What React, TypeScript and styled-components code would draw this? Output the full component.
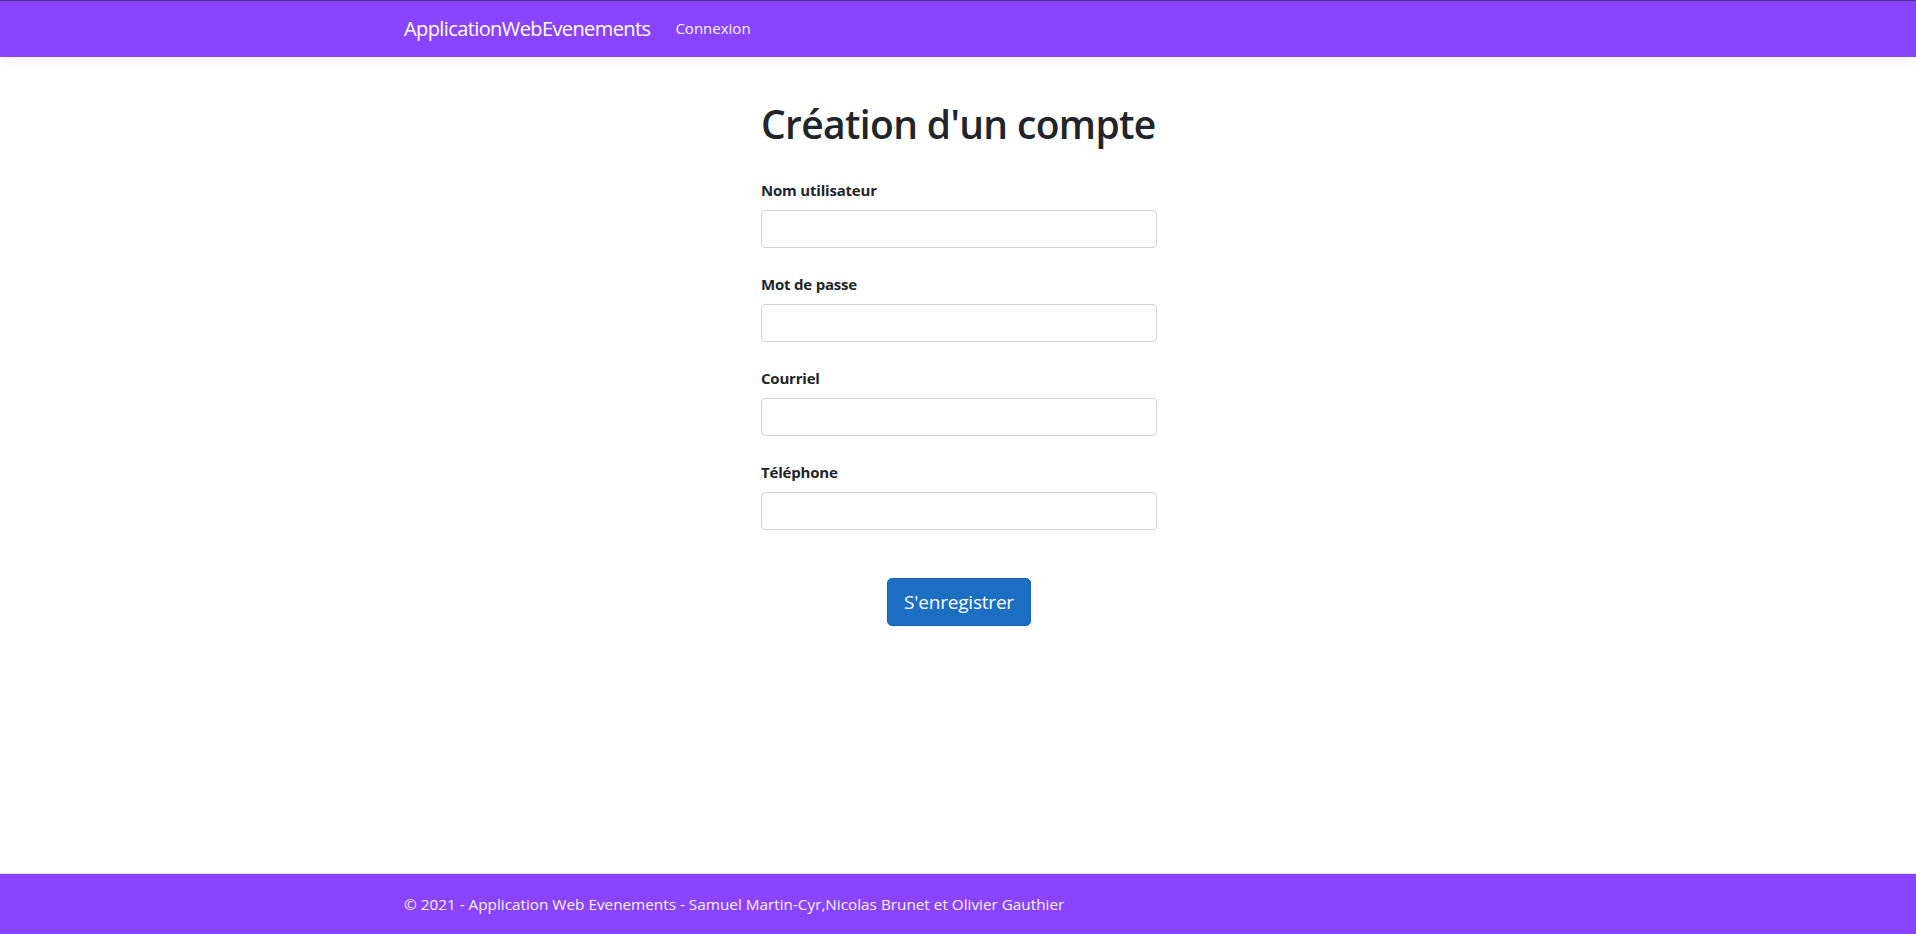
import React from "react";
import styled, { createGlobalStyle } from "styled-components";

const GlobalStyle = createGlobalStyle`
  html, body { margin: 0; padding: 0; }
  body {
    font-family: "Open Sans", "Noto Sans", "Liberation Sans", sans-serif;
    font-size: 16px;
    line-height: 1.5;
    color: #212529;
    background: #fff;
  }
  * { box-sizing: border-box; }
`;

const Page = styled.div`
  min-height: 934px;
  display: flex;
  flex-direction: column;
`;

const NavBar = styled.header`
  height: 57px;
  background: #8b44fe;
  border-top: 1px solid #4b3190;
  box-shadow: 0 4px 12px rgba(0, 0, 0, 0.05);
`;

const Container = styled.div`
  width: 1140px;
  margin: 0 auto;
  padding: 0 15px 0 16px;
  height: 100%;
  display: flex;
  align-items: center;
`;

const Brand = styled.a`
  color: #fff;
  font-size: 20px;
  line-height: 30px;
  margin-right: 17px;
  text-decoration: none;
  letter-spacing: -0.6px;
  margin-top: -1px;
`;

const NavLink = styled.a`
  color: #f4eeff;
  font-size: 15px;
  padding: 0 8px;
  text-decoration: none;
  margin-top: -2px;
`;

const Main = styled.main`
  flex: 1;
  display: flex;
  flex-direction: column;
  align-items: center;
  padding-top: 43px;
  padding-left: 2px;
`;

const Form = styled.form`
  width: 396px;
  display: flex;
  flex-direction: column;
`;

const Title = styled.h1`
  margin: 0 0 30px;
  font-size: 39px;
  line-height: 48px;
  font-weight: 600;
  color: #212529;
  letter-spacing: -0.65px;
  white-space: nowrap;
`;

const Group = styled.div`
  display: flex;
  flex-direction: column;
  margin-bottom: 24px;
`;

const Label = styled.label`
  font-weight: 700;
  font-size: 15px;
  line-height: 24px;
  margin-bottom: 8px;
  letter-spacing: -0.2px;
`;

const Input = styled.input`
  height: 38px;
  width: 100%;
  border: 1px solid #ced4da;
  border-radius: 4px;
  padding: 6px 12px;
  font-size: 16px;
  font-family: inherit;
  background: #fff;
`;

const ButtonRow = styled.div`
  display: flex;
  justify-content: center;
  margin-top: 24px;
`;

const Button = styled.button`
  width: 144px;
  height: 48px;
  background: #1b6ec2;
  border: 1px solid #1861ac;
  border-radius: 5px;
  color: #fff;
  font-family: inherit;
  font-size: 19px;
  letter-spacing: -0.2px;
  cursor: pointer;
`;

const Footer = styled.footer`
  height: 61px;
  background: #8b44fe;
  border-top: 1px solid #dee2e6;
`;

const FooterText = styled.span`
  color: #f6f0ff;
  font-size: 15.3px;
  line-height: 60px;
`;

const fields = ["Nom utilisateur", "Mot de passe", "Courriel", "Téléphone"];

export default function App() {
  return (
    <Page>
      <GlobalStyle />
      <NavBar>
        <Container>
          <Brand href="#">ApplicationWebEvenements</Brand>
          <NavLink href="#">Connexion</NavLink>
        </Container>
      </NavBar>
      <Main>
        <Form onSubmit={(e) => e.preventDefault()}>
          <Title>Création d'un compte</Title>
          {fields.map((f) => (
            <Group key={f}>
              <Label>{f}</Label>
              <Input type={f === "Mot de passe" ? "password" : "text"} />
            </Group>
          ))}
          <ButtonRow>
            <Button type="submit">S'enregistrer</Button>
          </ButtonRow>
        </Form>
      </Main>
      <Footer>
        <Container>
          <FooterText>
            © 2021 - Application Web Evenements - Samuel Martin-Cyr,Nicolas Brunet et Olivier Gauthier
          </FooterText>
        </Container>
      </Footer>
    </Page>
  );
}
